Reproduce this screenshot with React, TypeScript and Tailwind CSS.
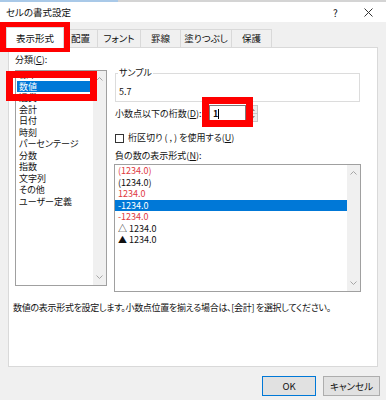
import React from "react"

const categories = [
  "標準",
  "数値",
  "通貨",
  "会計",
  "日付",
  "時刻",
  "パーセンテージ",
  "分数",
  "指数",
  "文字列",
  "その他",
  "ユーザー定義",
]

const negatives = [
  { text: "(1234.0)", red: true },
  { text: "(1234.0)", red: false },
  { text: "1234.0", red: true },
  { text: "-1234.0", red: false, selected: true },
  { text: "-1234.0", red: true },
  { text: "△ 1234.0", red: false },
  { text: "▲ 1234.0", red: false },
]

const tabs = ["配置", "フォント", "罫線", "塗りつぶし", "保護"]
const tabWidths = ["w-[34px]", "w-[43px]", "w-[40px]", "w-[51px]", "w-[40px]"]

function Chevron({ up }: { up?: boolean }) {
  return (
    <svg width="7" height="4" viewBox="0 0 7 4" className="text-[#a6a6a6]">
      <polyline
        points={up ? "0.5,3.5 3.5,0.5 6.5,3.5" : "0.5,0.5 3.5,3.5 6.5,0.5"}
        fill="none"
        stroke="currentColor"
        strokeWidth="1"
      />
    </svg>
  )
}

function Scrollbar() {
  return (
    <div className="w-[13px] h-full bg-[#f0f0f0] flex flex-col items-center justify-between py-[6px]">
      <Chevron up />
      <Chevron />
    </div>
  )
}

function RedBox({ className }: { className: string }) {
  return <div className={`absolute border-[7px] border-[#ff0000] pointer-events-none ${className}`} />
}

export default function App() {
  return (
    <div className="relative w-[386px] h-[400px] overflow-hidden bg-[#f0f0f0] text-[9px] text-[#111] [font-family:'Noto_Sans_CJK_JP',sans-serif] [font-feature-settings:'palt']">
      {/* window edge */}
      <div className="flex h-[2px]">
        <div className="w-[118px] bg-[#a9c9e8]" />
        <div className="flex-1 bg-[#d4d4d4]" />
      </div>

      {/* title bar */}
      <div className="flex items-center h-[20px] bg-white pl-[6px] text-[9.5px]">
        <span>セルの書式設定</span>
        <span className="ml-auto w-[31px] text-[10px]">?</span>
        <svg width="9" height="9" viewBox="0 0 9 9" className="mr-[13px]">
          <path d="M0.5 0.5L8.5 8.5M8.5 0.5L0.5 8.5" stroke="#333" strokeWidth="1" />
        </svg>
      </div>

      {/* tabs */}
      <div className="flex items-end h-[25px] pl-[6px] text-[9.5px]">
        <div className="relative z-10 -mb-px flex items-center justify-center w-[58px] h-[21px] bg-white border border-b-0 border-[#d9d9d9]">
          表示形式
        </div>
        {tabs.map((t, i) => (
          <div
            key={t}
            className={`flex items-center justify-center h-[18px] border-t border-r border-[#d9d9d9] bg-[#f0f0f0] ${tabWidths[i]}`}
          >
            {t}
          </div>
        ))}
      </div>

      {/* panel */}
      <div className="mx-[8px] h-[320px] bg-white border border-[#d9d9d9] flex flex-col">
        <div className="flex pl-[6px]">
          {/* category list */}
          <div className="flex flex-col w-[92px]">
            <div className="mt-[6px] h-[12px] leading-[12px]">
              分類(<span className="underline">C</span>):
            </div>
            <div className="mt-[4px] h-[216px] border border-[#a0a0a0] flex overflow-hidden">
              <div className="flex-1 overflow-hidden">
                <div className="-mt-[2px] pl-px">
                  {categories.map((c) => (
                    <div
                      key={c}
                      className={`h-[11.5px] leading-[11.5px] pl-[2px] whitespace-nowrap ${
                        c === "数値" ? "bg-[#0078d7] text-white" : ""
                      }`}
                    >
                      {c}
                    </div>
                  ))}
                </div>
              </div>
              <Scrollbar />
            </div>
          </div>

          {/* right side */}
          <div className="ml-[7px] w-[247px] flex flex-col">
            <fieldset className="mt-[19px] ml-px w-[245px] border border-[#dcdcdc] px-[2px] pb-[3px]">
              <legend className="px-px leading-[12px]">サンプル</legend>
              <div className="mt-[7px] ml-[1px] h-[12px] leading-[12px]">5.7</div>
            </fieldset>

            <div className="mt-[3px] flex items-center h-[17px] ml-px">
              <div className="w-[94px] whitespace-nowrap">
                小数点以下の桁数(<span className="underline">D</span>):
              </div>
              <div className="w-[37px] h-[17px] border border-[#7a7a7a] bg-white flex items-center pl-[3px]">
                <span className="font-bold">1</span>
                <span className="w-px h-[10px] bg-black" />
              </div>
              <div className="w-[12px] h-[17px] flex flex-col">
                <div className="flex-1 border border-[#c8c8c8] bg-[#ececec] flex items-center justify-center">
                  <svg width="5" height="3" viewBox="0 0 5 3">
                    <path d="M0 3L2.5 0L5 3Z" fill="#888" />
                  </svg>
                </div>
                <div className="flex-1 border border-t-0 border-[#c8c8c8] bg-[#ececec] flex items-center justify-center">
                  <svg width="5" height="3" viewBox="0 0 5 3">
                    <path d="M0 0L2.5 3L5 0Z" fill="#888" />
                  </svg>
                </div>
              </div>
            </div>

            <div className="mt-[10px] flex items-center h-[12px] ml-px">
              <div className="w-[9px] h-[9px] border border-[#333] bg-white" />
              <span className="ml-[4px] leading-[12px]">
                桁区切り ( , ) を使用する(<span className="underline">U</span>)
              </span>
            </div>

            <div className="mt-[6px] h-[12px] leading-[12px] ml-px">
              負の数の表示形式(<span className="underline">N</span>):
            </div>

            <div className="mt-[2px] h-[128px] border border-[#a0a0a0] flex overflow-hidden">
              <div className="flex-1">
                {negatives.map((n, i) => (
                  <div
                    key={i}
                    className={`h-[11.5px] leading-[11.5px] pl-[3px] ${
                      n.selected ? "bg-[#0078d7] text-white" : n.red ? "text-[#e0393e]" : ""
                    }`}
                  >
                    {n.text}
                  </div>
                ))}
              </div>
              <Scrollbar />
            </div>
          </div>
        </div>

        <div className="mt-[10px] pl-[4px] h-[12px] leading-[12px] whitespace-nowrap tracking-[-0.3px]">
          数値の表示形式を設定します。小数点位置を揃える場合は、[会計] を選択してください。
        </div>
      </div>

      {/* buttons */}
      <div className="mt-[9px] flex justify-end gap-[7px] pr-[6px] text-[9.5px]">
        <button className="w-[54px] h-[20px] border border-[#0078d7] bg-[#e1e1e1]">OK</button>
        <button className="w-[57px] h-[20px] border border-[#adadad] bg-[#e1e1e1]">キャンセル</button>
      </div>

      {/* highlight overlays */}
      <RedBox className="left-0 top-[22px] w-[70px] h-[30px]" />
      <RedBox className="left-[6px] top-[71px] w-[91px] h-[30px]" />
      <RedBox className="left-[202px] top-[97px] w-[51px] h-[30px]" />
    </div>
  )
}
